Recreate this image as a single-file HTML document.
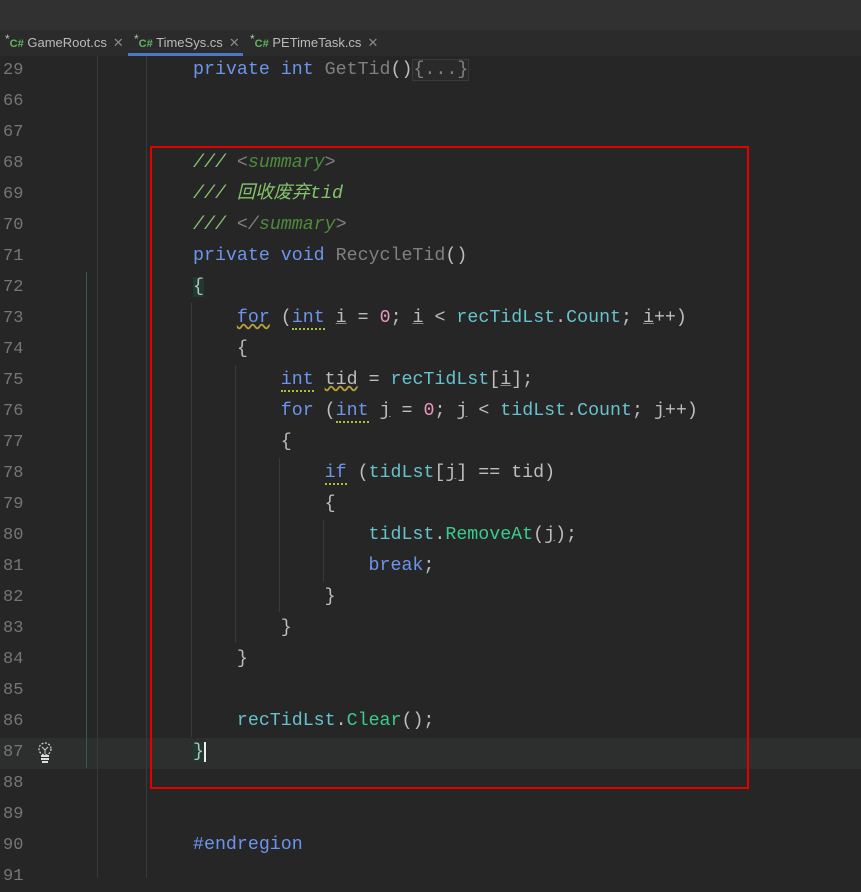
<!DOCTYPE html>
<html><head><meta charset="utf-8"><style>
body{margin:0;width:861px;height:878px;background:#262626;overflow:hidden;position:relative;font-family:"Liberation Mono","Noto Sans CJK SC",monospace;}
.top{position:absolute;left:0;top:0;width:861px;height:30px;background:#313131;}
.tabs{position:absolute;left:0;top:30px;width:861px;height:26px;background:#2b2b2b;font-family:"Liberation Sans",sans-serif;font-size:13px;color:#bbb;}
.tab{position:absolute;top:0;height:26px;line-height:26px;}
.tab .c{color:#5fb65f;font-weight:bold;font-size:11px}
.tab .s{color:#bbb;font-size:12px;position:relative;top:-4px}
.tab .x{color:#888;margin-left:6px}
.ul{position:absolute;left:128px;top:53px;width:115px;height:3px;background:#4a78c2}
.ln{position:absolute;left:3px;width:40px;color:#767676;font-size:17px;}
.code{position:absolute;left:193px;white-space:pre;font-size:18.3px;color:#bdbdbd;}
.row{position:absolute;height:31px;line-height:31px;}
.k{color:#6c95eb}.m{color:#808080}.f{color:#39cc8f}.v{color:#66c3cc}.n{color:#ed94c0}.c1{color:#85c46c;font-style:italic}.t{color:#4e8a3e;font-style:italic}.g{color:#808080;font-style:italic}
.u{text-decoration:underline;text-decoration-color:#888}
.w{text-decoration:underline wavy #b8a23a}
.d{border-bottom:2px dotted #a7c23a}
.vl{position:absolute;width:1px;background:#3a3a3a}
</style></head><body>
<div class="top"></div>
<div class="tabs">
<div class="tab" style="left:5px"><span class="s">*</span><span class="c">C#</span> GameRoot.cs<span class="x">✕</span></div>
<div class="tab" style="left:134px"><span class="s">*</span><span class="c">C#</span> TimeSys.cs<span class="x">✕</span></div>
<div class="tab" style="left:250px"><span class="s">*</span><span class="c">C#</span> PETimeTask.cs<span class="x">✕</span></div>
</div>
<div class="ul"></div>
<div style="position:absolute;left:0;top:738px;width:861px;height:31px;background:#2d2f2f"></div>
<div class="vl" style="left:97px;top:56px;height:822px"></div>
<div class="vl" style="left:146px;top:56px;height:822px"></div>
<div class="vl" style="left:191px;top:303px;height:434px"></div>
<div class="vl" style="left:235px;top:365px;height:278px"></div>
<div class="vl" style="left:279px;top:458px;height:154px"></div>
<div class="vl" style="left:323px;top:520px;height:62px"></div>
<div style="position:absolute;left:86px;top:272px;width:1px;height:496px;background:#2f5f52"></div>
<svg style="position:absolute;left:36px;top:741px" width="18" height="24" viewBox="0 0 18 24"><circle cx="9" cy="8" r="6" fill="none" stroke="#ccc" stroke-width="1.3" stroke-dasharray="2 1.5"/><path d="M6 6l3 3 3-3M9 9v4" stroke="#ccc" fill="none"/><rect x="5" y="14" width="8" height="2" fill="#ddd"/><rect x="5" y="17" width="8" height="2" fill="#ddd"/><rect x="6" y="20" width="6" height="2" fill="#ddd"/></svg>
<div style="position:absolute;left:150px;top:146px;width:595px;height:639px;border:2px solid #e50000"></div>
<div class="code" style="top:55px">
<div class="row" style="top:0"><span class="k">private int</span> <span class="m">GetTid</span>()<span style="color:#808080;border:1px solid #3a3a3a;background:#2a2a2a">{...}</span></div>
<div class="row" style="top:93px"><span class="c1">/// </span><span class="g">&lt;</span><span class="t">summary</span><span class="g">&gt;</span></div>
<div class="row" style="top:124px"><span class="c1">/// 回收废弃tid</span></div>
<div class="row" style="top:155px"><span class="c1">/// </span><span class="g">&lt;/</span><span class="t">summary</span><span class="g">&gt;</span></div>
<div class="row" style="top:186px"><span class="k">private void</span> <span class="m">RecycleTid</span>()</div>
<div class="row" style="top:217px"><span style="background:#1d3b32">{</span></div>
<div class="row" style="top:248px">    <span class="k w">for</span> (<span class="k d">int</span> <span class="u">i</span> = <span class="n">0</span>; <span class="u">i</span> &lt; <span class="v">recTidLst</span>.<span class="v">Count</span>; <span class="u">i</span>++)</div>
<div class="row" style="top:279px">    {</div>
<div class="row" style="top:310px">        <span class="k d">int</span> <span class="w">tid</span> = <span class="v">recTidLst</span>[<span class="u">i</span>];</div>
<div class="row" style="top:341px">        <span class="k">for</span> (<span class="k d">int</span> <span class="u">j</span> = <span class="n">0</span>; <span class="u">j</span> &lt; <span class="v">tidLst</span>.<span class="v">Count</span>; <span class="u">j</span>++)</div>
<div class="row" style="top:372px">        {</div>
<div class="row" style="top:403px">            <span class="k d">if</span> (<span class="v">tidLst</span>[<span class="u">j</span>] == tid)</div>
<div class="row" style="top:434px">            {</div>
<div class="row" style="top:465px">                <span class="v">tidLst</span>.<span class="f">RemoveAt</span>(<span class="u">j</span>);</div>
<div class="row" style="top:496px">                <span class="k">break</span>;</div>
<div class="row" style="top:527px">            }</div>
<div class="row" style="top:558px">        }</div>
<div class="row" style="top:589px">    }</div>
<div class="row" style="top:651px">    <span class="v">recTidLst</span>.<span class="f">Clear</span>();</div>
<div class="row" style="top:682px"><span style="background:#1d3b32">}</span><span style="border-left:2px solid #eee"></span></div>
<div class="row" style="top:775px"><span class="k">#endregion</span></div>
</div>
<div style="position:absolute;top:55px;left:0">
<div class="ln row" style="top:0">29</div><div class="ln row" style="top:31px">66</div><div class="ln row" style="top:62px">67</div><div class="ln row" style="top:93px">68</div><div class="ln row" style="top:124px">69</div><div class="ln row" style="top:155px">70</div><div class="ln row" style="top:186px">71</div><div class="ln row" style="top:217px">72</div><div class="ln row" style="top:248px">73</div><div class="ln row" style="top:279px">74</div><div class="ln row" style="top:310px">75</div><div class="ln row" style="top:341px">76</div><div class="ln row" style="top:372px">77</div><div class="ln row" style="top:403px">78</div><div class="ln row" style="top:434px">79</div><div class="ln row" style="top:465px">80</div><div class="ln row" style="top:496px">81</div><div class="ln row" style="top:527px">82</div><div class="ln row" style="top:558px">83</div><div class="ln row" style="top:589px">84</div><div class="ln row" style="top:620px">85</div><div class="ln row" style="top:651px">86</div><div class="ln row" style="top:682px">87</div><div class="ln row" style="top:713px">88</div><div class="ln row" style="top:744px">89</div><div class="ln row" style="top:775px">90</div><div class="ln row" style="top:806px">91</div>
</div>
</body></html>
